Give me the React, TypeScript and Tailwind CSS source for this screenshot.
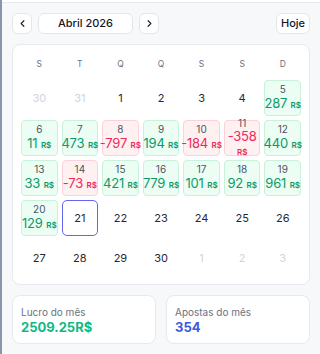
import { ChevronLeft, ChevronRight } from 'lucide-react';

const WEEKDAYS = ['S', 'T', 'Q', 'Q', 'S', 'S', 'D'];

// profit per day of April 2026
const PROFITS: Record<number, number> = {
  5: 287, 6: 11, 7: 473, 8: -797, 9: 194, 10: -184, 11: -358, 12: 440,
  13: 33, 14: -73, 15: 421, 16: 779, 17: 101, 18: 92, 19: 961, 20: 129,
};

// the one amount that wraps onto two lines
const WRAPS = [11];

type Cell = { day: number; inMonth: boolean };

function buildCells(): Cell[] {
  const cells: Cell[] = [{ day: 30, inMonth: false }, { day: 31, inMonth: false }];
  for (let d = 1; d <= 30; d++) cells.push({ day: d, inMonth: true });
  for (let d = 1; d <= 3; d++) cells.push({ day: d, inMonth: false });
  return cells;
}

function DayCell({ cell }: { cell: Cell }) {
  const profit = cell.inMonth ? PROFITS[cell.day] : undefined;

  if (profit !== undefined) {
    const win = profit >= 0;
    const wraps = WRAPS.includes(cell.day);
    return (
      <div
        className={`h-9 rounded-[4px] border flex flex-col items-center justify-center leading-none ${
          win ? 'bg-[#ecfdf3] border-[#c9f2dc]' : 'bg-[#fff0f2] border-[#fbd2d9]'
        }`}
      >
        <div className="text-[10px] text-[#4b5563] leading-[12px]">{cell.day}</div>
        <div
          className={`text-[13px] text-center tracking-[-0.2px] ${
            wraps ? 'leading-[14px]' : 'leading-[16px] whitespace-nowrap'
          } ${win ? 'text-[#0c9a6c]' : 'text-[#f0295a]'}`}
        >
          {profit}
          {wraps ? <br /> : ' '}
          <span className="text-[8px] font-semibold tracking-normal">R$</span>
        </div>
      </div>
    );
  }

  if (cell.inMonth && cell.day === 21) {
    return (
      <div className="h-9 rounded-[5px] border-[1.5px] border-[#6366f1] flex items-center justify-center text-[11px] text-[#1f2937]">
        {cell.day}
      </div>
    );
  }

  return (
    <div
      className={`h-9 flex items-center justify-center text-[11px] ${
        cell.inMonth ? 'text-[#1f2937]' : 'text-[#cfd6e0]'
      }`}
    >
      {cell.day}
    </div>
  );
}

export default function App() {
  const cells = buildCells();

  return (
    <div
      className="w-[320px] h-[354px] bg-[#f7f8fa] border-l-2 border-[#8c96ab] overflow-hidden"
      style={{ fontFamily: 'Inter, "Open Sans", sans-serif' }}
    >
      <div className="h-[3px] bg-white border-b border-[#e6e9ee]" />

      <div className="px-[10px] pt-[10px]">
        {/* Month nav */}
        <div className="flex items-center gap-[6px] h-[21px]">
          <button className="w-5 h-[21px] rounded-md bg-white border border-[#e3e7ec] flex items-center justify-center">
            <ChevronLeft size={11} strokeWidth={2.6} className="text-[#1f2937]" />
          </button>
          <div className="w-[95px] h-[21px] rounded-md bg-white border border-[#e3e7ec] flex items-center justify-center text-[11px] font-medium text-[#111827]">
            Abril 2026
          </div>
          <button className="w-5 h-[21px] rounded-md bg-white border border-[#e3e7ec] flex items-center justify-center">
            <ChevronRight size={11} strokeWidth={2.6} className="text-[#1f2937]" />
          </button>
          <button className="ml-auto w-[34px] h-[21px] rounded-md bg-white border border-[#e3e7ec] text-[11px] font-medium text-[#111827]">
            Hoje
          </button>
        </div>

        {/* Calendar */}
        <div className="mt-[10px] bg-white border border-[#e6e9ee] rounded-lg p-2">
          <div className="grid grid-cols-7 gap-1">
            {WEEKDAYS.map((w, i) => (
              <div key={i} className="h-[23px] flex items-center justify-center text-[8.5px] text-[#6b7280]">
                {w}
              </div>
            ))}
            {cells.map((c, i) => (
              <DayCell key={i} cell={c} />
            ))}
          </div>
        </div>

        {/* Summary */}
        <div className="mt-[10px] grid grid-cols-2 gap-[10px]">
          <div className="h-[49px] bg-white border border-[#e6e9ee] rounded-lg px-[8px] pt-[10px]">
            <div className="text-[10px] text-[#6b7280] leading-[13px]">Lucro do mês</div>
            <div className="text-[13px] font-bold text-[#10b981] leading-[17px]">2509.25R$</div>
          </div>
          <div className="h-[49px] bg-white border border-[#e6e9ee] rounded-lg px-[8px] pt-[10px]">
            <div className="text-[10px] text-[#6b7280] leading-[13px]">Apostas do mês</div>
            <div className="text-[13px] font-bold text-[#3b5bdb] leading-[17px]">354</div>
          </div>
        </div>
      </div>
    </div>
  );
}
